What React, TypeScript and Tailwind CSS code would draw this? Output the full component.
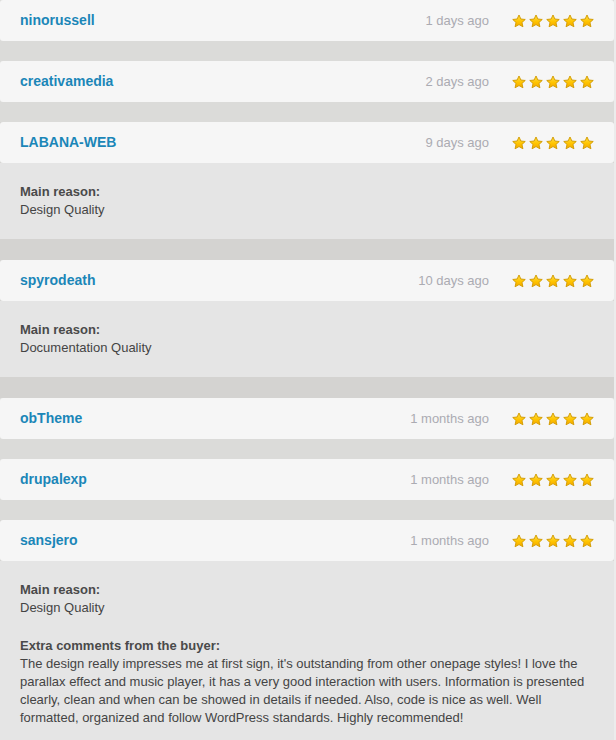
import React from "react";

type Review = {
  user: string;
  date: string;
  reason?: string;
  comment?: string;
};

const reviews: Review[] = [
  { user: "ninorussell", date: "1 days ago" },
  { user: "creativamedia", date: "2 days ago" },
  { user: "LABANA-WEB", date: "9 days ago", reason: "Design Quality" },
  { user: "spyrodeath", date: "10 days ago", reason: "Documentation Quality" },
  { user: "obTheme", date: "1 months ago" },
  { user: "drupalexp", date: "1 months ago" },
  {
    user: "sansjero",
    date: "1 months ago",
    reason: "Design Quality",
    comment:
      "The design really impresses me at first sign, it's outstanding from other onepage styles! I love the parallax effect and music player, it has a very good interaction with users. Information is presented clearly, clean and when can be showed in details if needed. Also, code is nice as well. Well formatted, organized and follow WordPress standards. Highly recommended!",
  },
];

function Star() {
  return (
    <svg width="14" height="14" viewBox="0 0 24 23" className="block">
      <defs>
        <linearGradient id="sg" x1="0" y1="0" x2="0" y2="1">
          <stop offset="0" stopColor="#ffe04a" />
          <stop offset="0.55" stopColor="#ffc400" />
          <stop offset="1" stopColor="#f5a800" />
        </linearGradient>
      </defs>
      <path
        d="M12 1.2l3.2 6.9 7.5.8-5.6 5.1 1.6 7.4L12 17.6l-6.7 3.8 1.6-7.4L1.3 8.9l7.5-.8z"
        fill="url(#sg)"
        stroke="#d19a00"
        strokeWidth="1.6"
        strokeLinejoin="round"
      />
    </svg>
  );
}

function Stars() {
  return (
    <div className="flex items-center gap-[3px]">
      <Star />
      <Star />
      <Star />
      <Star />
      <Star />
    </div>
  );
}

function Item({ r }: { r: Review }) {
  const hasBody = !!r.reason;
  return (
    <div className={hasBody ? "bg-[#d4d3d1] pb-[21px]" : "bg-[#dbdbd9] pb-[20px]"}>
      <div className="h-[41px] bg-[#f6f6f6] rounded-[3px] flex items-center pl-[20px] pr-[20px]">
        <span className="text-[14px] font-bold text-[#1b86b8] flex-1">{r.user}</span>
        <span className="text-[13px] text-[#ababb2] mr-[23px]">{r.date}</span>
        <Stars />
      </div>
      {hasBody && (
        <div className="bg-[#e5e5e5] px-[20px] py-[20px] text-[13px] leading-[18px] text-[#444444]">
          <div className="font-bold text-[#4a4a4a]">Main reason:</div>
          <div>{r.reason}</div>
          {r.comment && (
            <div className="mt-[20px]">
              <div className="font-bold text-[#4a4a4a]">Extra comments from the buyer:</div>
              <div>{r.comment}</div>
            </div>
          )}
        </div>
      )}
    </div>
  );
}

export default function App() {
  return (
    <div
      className="w-[616px] h-[740px] overflow-hidden bg-[#ececec]"
      style={{ fontFamily: '"Liberation Sans", Arial, sans-serif' }}
    >
      <div className="w-[614px]">
        {reviews.map((r) => (
          <Item key={r.user} r={r} />
        ))}
      </div>
    </div>
  );
}
